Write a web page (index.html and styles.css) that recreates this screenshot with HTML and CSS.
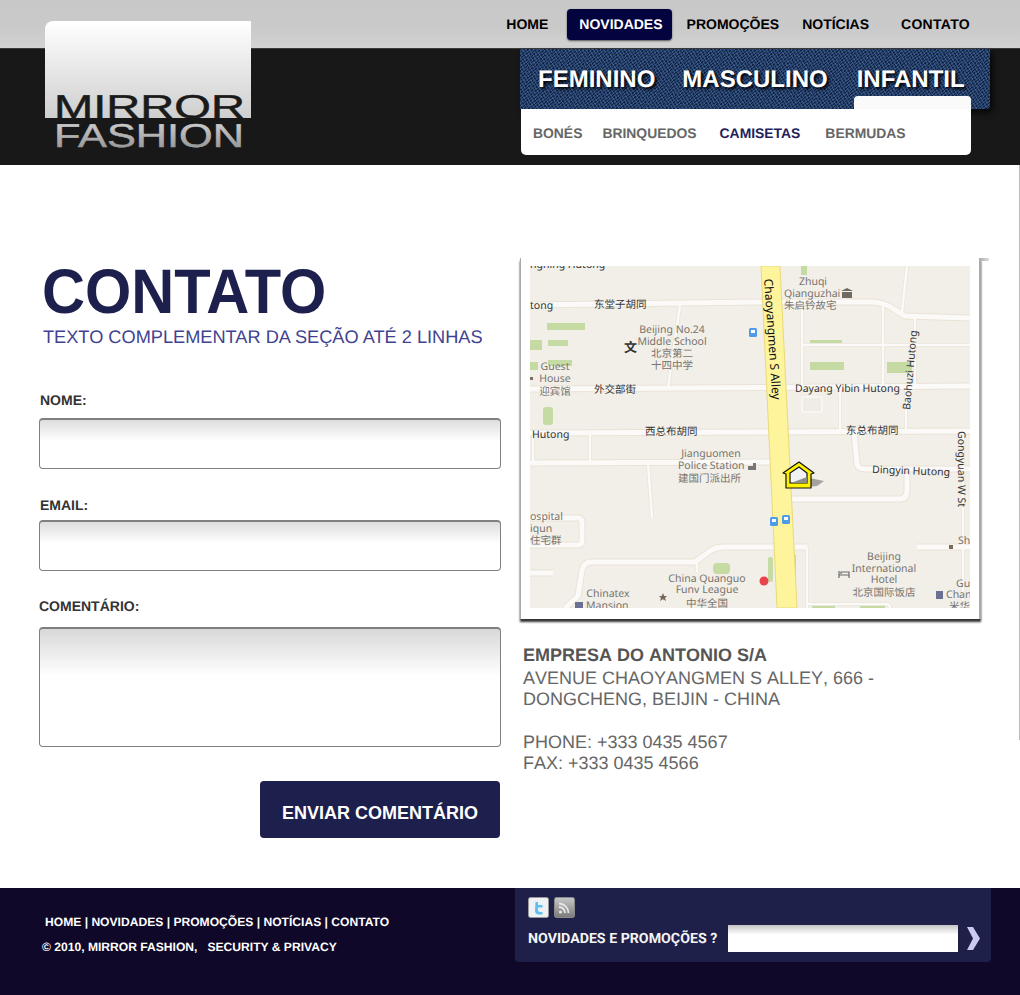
FILE: index.html
```html
<!DOCTYPE html>
<html lang="pt-BR">
<head>
    <meta charset="UTF-8">
    <meta name="viewport" content="width=device-width, initial-scale=1.0">
    <title>Mirror Fashion - Contato</title>
    <link rel="stylesheet" href="styles.css">
</head>
<body>
    <header class="site-header">
        <svg class="logo" width="206" height="130" viewBox="0 0 206 130" role="img" aria-label="Mirror Fashion">
            <defs>
                <linearGradient id="logo-panel" x1="0" y1="0" x2="0" y2="1">
                    <stop offset="0" stop-color="#ffffff"/>
                    <stop offset="1" stop-color="#cfcfcf"/>
                </linearGradient>
                <linearGradient id="logo-word" x1="0" y1="0" x2="0" y2="1">
                    <stop offset="0" stop-color="#d8d8d8"/>
                    <stop offset="1" stop-color="#8c8c8c"/>
                </linearGradient>
            </defs>
            <path d="M0 97V8a8 8 0 0 1 8-8H206V97Z" fill="url(#logo-panel)"/>
            <text class="logo-text" x="9" y="97" font-size="33" textLength="191" lengthAdjust="spacingAndGlyphs" fill="#1a1a1a" stroke="#1a1a1a" stroke-width=".5">MIRROR</text>
            <text class="logo-text" x="9" y="126" font-size="33" textLength="190" lengthAdjust="spacingAndGlyphs" fill="url(#logo-word)" stroke="url(#logo-word)" stroke-width=".5">FASHION</text>
        </svg>

        <div class="topbar">
            <nav class="top-nav">
                <a href="#">HOME</a>
                <a href="#" class="current">NOVIDADES</a>
                <a href="#">PROMOÇÕES</a>
                <a href="#">NOTÍCIAS</a>
                <a href="#">CONTATO</a>
            </nav>
        </div>

        <div class="band">
            <div class="menu">
                <nav class="categories">
                    <a href="#">FEMININO</a>
                    <a href="#">MASCULINO</a>
                    <a href="#">INFANTIL</a>
                    <span class="active-tab"></span>
                </nav>
                <nav class="subnav">
                    <a href="#">BONÉS</a>
                    <a href="#">BRINQUEDOS</a>
                    <a href="#" class="current">CAMISETAS</a>
                    <a href="#">BERMUDAS</a>
                </nav>
            </div>
        </div>
    </header>

    <main class="content">
        <section class="contact-col">
            <h1>CONTATO</h1>
            <p class="lead">TEXTO COMPLEMENTAR DA SEÇÃO ATÉ 2 LINHAS</p>

            <form class="contact-form">
                <label for="nome" class="label-nome">NOME:</label>
                <input type="text" id="nome" name="nome" class="input-nome">
                <label for="email" class="label-email">EMAIL:</label>
                <input type="text" id="email" name="email" class="input-email">
                <label for="comentario" class="label-comentario">COMENTÁRIO:</label>
                <textarea id="comentario" name="comentario"></textarea>
                <button type="submit"><span>ENVIAR COMENTÁRIO</span></button>
            </form>
        </section>

        <section class="info-col">
            <div class="map-frame">
                <svg class="map" width="440" height="342" viewBox="530 266 440 342" role="img" aria-label="Mapa">
                    <rect x="530" y="266" width="440" height="342" fill="#f2efe9"/>

                    <g fill="#c6dba4">
                        <rect x="547" y="323" width="38" height="7"/>
                        <rect x="530" y="340" width="12" height="10"/>
                        <rect x="548" y="340" width="20" height="6"/>
                        <rect x="548" y="360" width="24" height="6"/>
                        <rect x="530" y="362" width="8" height="8"/>
                        <rect x="543" y="407" width="10" height="18" rx="3"/>
                        <rect x="801" y="266" width="6" height="9"/>
                        <rect x="810" y="340" width="32" height="3"/>
                        <rect x="810" y="362" width="34" height="8"/>
                        <rect x="887" y="362" width="25" height="11"/>
                        <rect x="713" y="563" width="17" height="11" rx="4"/>
                        <rect x="768" y="557" width="5" height="25" rx="2"/>
                        <rect x="793" y="555" width="3" height="35"/>
                        <rect x="812" y="605" width="23" height="3"/>
                        <rect x="860" y="605" width="25" height="3"/>
                    </g>

                    <g fill="none" stroke="#e9e3d6" stroke-linejoin="round">
                        <path stroke-width="7" d="M530 305 L760 302 H870 Q885 302 895 310 L905 316 L970 318 M530 389 L970 386 M530 433 L970 431 M530 463 L770 462 M790 499 H900 Q907 499 907 490 V474 M854 432 L857 464 Q858 469 866 469 H970 M807 547 H725 Q716 547 710 551 L695 562 H592 Q584 562 582 570 L578 596 L565 608 M530 573 H553 M917 547 H970 M530 518 H578 Q582 518 582 522 V541 Q582 545 578 545 H530"/>
                        <path stroke-width="4" d="M907 266 L902 312 M915 316 V388 L906 388 V431 M802 305 V386 M883 305 V386 M802 345 H970 M840 386 V431 M680 305 L668 388 M590 432 V462 M533 432 V462 M648 463 L652 518 M963 432 V608 M807 547 V608 M807 604 H885 Q890 604 890 608 M697 562 V572"/>
                    </g>
                    <g fill="none" stroke="#fbfaf8" stroke-linejoin="round">
                        <path stroke-width="5" d="M530 305 L760 302 H870 Q885 302 895 310 L905 316 L970 318 M530 389 L970 386 M530 433 L970 431 M530 463 L770 462 M790 499 H900 Q907 499 907 490 V474 M854 432 L857 464 Q858 469 866 469 H970 M807 547 H725 Q716 547 710 551 L695 562 H592 Q584 562 582 570 L578 596 L565 608 M530 573 H553 M917 547 H970 M530 518 H578 Q582 518 582 522 V541 Q582 545 578 545 H530"/>
                        <path stroke-width="2.5" d="M907 266 L902 312 M915 316 V388 L906 388 V431 M802 305 V386 M883 305 V386 M802 345 H970 M840 386 V431 M680 305 L668 388 M590 432 V462 M533 432 V462 M648 463 L652 518 M963 432 V608 M807 547 V608 M807 604 H885 Q890 604 890 608 M697 562 V572"/>
                    </g>
                    <rect x="802" y="397" width="20" height="15" rx="2" fill="#efece5" stroke="#f8f6f2" stroke-width="2"/>

                    <polygon points="761,266 780,266 797,608 777,608" fill="#fdf49c" stroke="#e8d97c" stroke-width="1"/>

                    <text class="m-st" x="530" y="268">nghing Hutong</text>
                    <text class="m-st" x="594" y="308">东堂子胡同</text>
                    <text class="m-st" x="530" y="309">tong</text>
                    <text class="m-poi" x="813" y="285" text-anchor="middle">Zhuqi</text>
                    <text class="m-poi" x="784" y="297">Qianguzhai</text>
                    <text class="m-poi" x="784" y="309">朱启钤故宅</text>
                    <text class="m-poi" x="672" y="333" text-anchor="middle">Beijing No.24</text>
                    <text class="m-poi" x="672" y="345" text-anchor="middle">Middle School</text>
                    <text class="m-poi" x="672" y="357" text-anchor="middle">北京第二</text>
                    <text class="m-poi" x="672" y="369" text-anchor="middle">十四中学</text>
                    <text class="m-st m-glyph" x="624" y="352">文</text>
                    <text class="m-poi" x="555" y="370" text-anchor="middle">Guest</text>
                    <text class="m-poi" x="555" y="382" text-anchor="middle">House</text>
                    <text class="m-poi" x="555" y="395" text-anchor="middle">迎宾馆</text>
                    <text class="m-st" x="594" y="393">外交部街</text>
                    <text class="m-st" x="795" y="392">Dayang Yibin Hutong</text>
                    <text class="m-st" x="532" y="438">Hutong</text>
                    <text class="m-st" x="645" y="435">西总布胡同</text>
                    <text class="m-st" x="846" y="434">东总布胡同</text>
                    <text class="m-poi" x="711" y="457" text-anchor="middle">Jianguomen</text>
                    <text class="m-poi" x="678" y="469">Police Station</text>
                    <text class="m-poi" x="678" y="482">建国门派出所</text>
                    <text class="m-st" x="872" y="473" transform="rotate(2 872 473)">Dingyin Hutong</text>
                    <text class="m-poi" x="530" y="520">ospital</text>
                    <text class="m-poi" x="530" y="532">iqun</text>
                    <text class="m-poi" x="530" y="544">住宅群</text>
                    <text class="m-poi" x="958" y="544">Sh</text>
                    <text class="m-poi" x="884" y="560" text-anchor="middle">Beijing</text>
                    <text class="m-poi" x="884" y="572" text-anchor="middle">International</text>
                    <text class="m-poi" x="884" y="583" text-anchor="middle">Hotel</text>
                    <text class="m-poi" x="884" y="596" text-anchor="middle">北京国际饭店</text>
                    <text class="m-poi" x="956" y="587">Gu</text>
                    <text class="m-poi" x="946" y="598">Chan</text>
                    <text class="m-poi" x="949" y="610">米华</text>
                    <text class="m-poi" x="707" y="582" text-anchor="middle">China Quanguo</text>
                    <text class="m-poi" x="707" y="593" text-anchor="middle">Funv League</text>
                    <text class="m-poi" x="707" y="607" text-anchor="middle">中华全国</text>
                    <text class="m-poi" x="608" y="597" text-anchor="middle">Chinatex</text>
                    <text class="m-poi" x="586" y="609">Mansion</text>

                    <text class="m-st m-main" x="764" y="279" transform="rotate(86 764 279)">Chaoyangmen S Alley</text>
                    <text class="m-st" x="910" y="410" transform="rotate(-85 910 410)">Baohuzi Hutong</text>
                    <text class="m-st" x="958" y="431" transform="rotate(90 958 431)">Gongyuan W St</text>

                    <!-- icones do mapa -->
                    <g fill="#4f9be8">
                        <rect x="749" y="328" width="8" height="9" rx="1.5"/>
                        <rect x="770" y="517" width="8" height="9" rx="1.5"/>
                        <rect x="782" y="515" width="8" height="9" rx="1.5"/>
                    </g>
                    <g fill="#ffffff">
                        <rect x="751" y="330" width="4" height="3"/>
                        <rect x="772" y="519" width="4" height="3"/>
                        <rect x="784" y="517" width="4" height="3"/>
                    </g>
                    <path d="M847 288 L853 291 H841 Z M842 292 H852 V298 H842 Z" fill="#6f6a60"/>
                    <rect x="530" y="377" width="3" height="3" fill="#7a6f60"/>
                    <path d="M748 466 h5 v-3 h3 v7 h-8 Z" fill="#777777"/>
                    <rect x="949" y="545" width="4" height="4" fill="#7a6a58"/>
                    <path d="M839 571 V578 M839 575 H849 V578 M841 574 V572 H849 V575" fill="none" stroke="#6a6a6a" stroke-width="1.2"/>
                    <path d="M936 591 h7 v8 h-7 Z M575 602 h8 v6 h-8 Z" fill="#6a6f94"/>
                    <circle cx="764" cy="581" r="4.5" fill="#e8424a"/>
                    <polygon points="663,593 664.2,596 667,596 665,598 666,601 663,599.3 660,601 661,598 659,596 661.8,596" fill="#75695a"/>

                    <!-- marcador -->
                    <polygon points="800,476 824,481 817,486 797,488" fill="#8a8a8a" opacity=".75"/>
                    <path d="M799 462 L814 473 L811 474 V488 H786 V474 L783 473 Z" fill="#fff200" stroke="#111111" stroke-width="1.2" stroke-linejoin="round"/>
                    <path d="M799 467 L807 473 V483 H790 V473 Z" fill="#f2f2f2" stroke="#111111" stroke-width="1.2"/>
                    <polygon points="791,483 807,477 807,483" fill="#8c8c8c"/>
                </svg>
            </div>

            <address class="company">
                <strong>EMPRESA DO ANTONIO S/A</strong>
                <span>AVENUE CHAOYANGMEN S ALLEY, 666 -</span>
                <span>DONGCHENG, BEIJIN - CHINA</span>
                <span class="phone">PHONE: +333 0435 4567</span>
                <span>FAX: +333 0435 4566</span>
            </address>
        </section>
    </main>

    <footer class="site-footer">
        <div class="footer-links">
            <p class="footer-nav">HOME | NOVIDADES | PROMOÇÕES | NOTÍCIAS | CONTATO</p>
            <p class="footer-copy">© 2010, MIRROR FASHION, &nbsp; SECURITY &amp; PRIVACY</p>
        </div>
        <div class="newsletter">
            <div class="social">
                <svg width="21" height="21" viewBox="0 0 21 21" role="img" aria-label="Twitter">
                    <rect x=".5" y=".5" width="20" height="20" rx="2" fill="#eef2f5" stroke="#9a9a9a"/>
                    <path d="M7.500 5h2.500v3h4.500v2.500h-4.500v2.500q0 2 2 2h2.500v2.500h-3.500q-4 0-4-4Z" fill="#5cc0ee"/>
                </svg>
                <svg width="21" height="21" viewBox="0 0 21 21" role="img" aria-label="RSS">
                    <defs>
                        <linearGradient id="rss-bg" x1="0" y1="0" x2="0" y2="1">
                            <stop offset="0" stop-color="#c8c8c8"/>
                            <stop offset="1" stop-color="#7a7a7a"/>
                        </linearGradient>
                    </defs>
                    <rect x=".5" y=".5" width="20" height="20" rx="2" fill="url(#rss-bg)" stroke="#8a8a8a"/>
                    <circle cx="6.500" cy="15" r="1.600" fill="#e6e6e6"/>
                    <path d="M5 10a6 6 0 0 1 6 6M5 6.500a9.500 9.500 0 0 1 9.500 9.500" fill="none" stroke="#e6e6e6" stroke-width="1.800"/>
                </svg>
            </div>
            <form class="news-form">
                <label for="news">NOVIDADES E PROMOÇÕES ?</label>
                <input type="text" id="news" name="news">
                <button type="submit" aria-label="Enviar">
                    <svg width="13" height="23" viewBox="0 0 13 23"><polygon points="0,0 6,0 13,11.500 6,23 0,23 6,11.500" fill="#c9c9f2"/></svg>
                </button>
            </form>
        </div>
    </footer>
</body>
</html>
```

FILE: styles.css
```css
body {
    margin: 0;
    font-family: "Liberation Sans", Arial, sans-serif;
    text-rendering: geometricPrecision;
    background-color: #fff;
}
a {
    text-decoration: none;
}
p {
    margin: 0;
}

/* header */
.site-header {
    position: relative;
}
.logo {
    position: absolute;
    left: 45px;
    top: 21px;
}
.logo-text {
    font-family: "Liberation Sans", Arial, sans-serif;
}
.topbar {
    display: flex;
    justify-content: flex-end;
    align-items: center;
    height: 49px;
    padding: 1px 50px 0 0;
    box-sizing: border-box;
    background: linear-gradient(#c8c8c8, #cacaca 60%, #d3d3d3);
    border-bottom: 1px solid #3c3c3c;
}
.top-nav {
    display: flex;
    align-items: center;
}
.top-nav a {
    color: #000;
    font-size: 14px;
    font-weight: bold;
    line-height: 31px;
}
.top-nav a.current {
    margin: 0 15px 0 19px;
    padding: 0 9px 0 12px;
    color: #fff;
    background-color: #03033f;
    border-radius: 4px;
    box-shadow: 0 1px 2px #555;
}
.top-nav a:last-child {
    margin-left: 32px;
    letter-spacing: .3px;
}
.top-nav a:nth-child(4) {
    margin-left: 23px;
}
.band {
    display: flex;
    justify-content: flex-end;
    height: 116px;
    padding-right: 30px;
    background-color: #181818;
}
.menu {
    width: 470px;
}
.categories {
    position: relative;
    display: flex;
    gap: 27px;
    height: 60px;
    padding-left: 18px;
    box-sizing: border-box;
    border-radius: 0 0 4px 0;
    background:
        repeating-linear-gradient(58deg, rgba(120, 160, 215, .28) 0 1px, transparent 1px 3px),
        repeating-linear-gradient(-37deg, rgba(0, 0, 25, .5) 0 1px, transparent 1px 2.500px),
        #24416c;
    box-shadow: 3px 4px 6px rgba(0, 0, 0, .7);
}
.categories a {
    color: #fff;
    font-size: 24px;
    font-weight: bold;
    line-height: 61px;
    text-shadow: 2px 2px 3px #000;
}
.categories a:last-of-type {
    margin-left: 2px;
}
.active-tab {
    position: absolute;
    left: 334px;
    top: 47px;
    width: 117px;
    height: 13px;
    background-color: #fafafa;
    border-radius: 4px 4px 0 0;
}
.subnav {
    position: relative;
    display: flex;
    width: 450px;
    height: 46px;
    margin-left: 1px;
    padding-left: 12px;
    box-sizing: border-box;
    background-color: #fff;
    border-radius: 0 0 5px 5px;
}
.subnav a {
    color: #666;
    font-size: 13.900px;
    font-weight: bold;
    line-height: 48px;
}
.subnav a:nth-child(2) {
    margin-left: 20px;
}
.subnav a:nth-child(3) {
    margin-left: 23px;
}
.subnav a:nth-child(4) {
    margin-left: 25px;
}
.subnav a.current {
    color: #261f5c;
}

/* content */
.content {
    display: flex;
    gap: 19px;
    padding: 91px 0 50px 39px;
    background: linear-gradient(#bbb, #bbb) right top / 1px 575px no-repeat;
}
.contact-col {
    width: 462px;
}
h1 {
    margin: 0 0 -2px 3px;
    color: #1d1f4d;
    font-size: 63px;
    line-height: 72px;
    transform: scaleX(.945);
    transform-origin: left center;
}
.lead {
    padding-left: 4px;
    color: #3f4291;
    font-size: 18.200px;
    line-height: 22px;
}
.contact-form {
    display: flex;
    flex-direction: column;
}
label {
    color: #333;
    font-size: 14px;
    font-weight: bold;
    line-height: 16px;
}
.label-nome {
    margin: 44px 0 10px 1px;
}
.label-email {
    margin: 28px 0 7px 1px;
}
.label-comentario {
    margin: 27px 0 13px;
}
.contact-form input,
.contact-form textarea {
    display: block;
    width: 100%;
    margin: 0;
    padding: 8px;
    box-sizing: border-box;
    border: 1px solid #808080;
    border-top-width: 2px;
    border-radius: 4px;
    resize: none;
    outline: none;
}
.contact-form input {
    height: 51px;
    background: linear-gradient(#dedede, #fff 45%);
}
.contact-form textarea {
    height: 120px;
    background: linear-gradient(#d8d8d8, #fff 40%);
}
.contact-form button {
    align-self: flex-end;
    width: 240px;
    height: 57px;
    margin: 34px 1px 0 0;
    padding: 8px 0 0;
    color: #fff;
    font-family: inherit;
    font-size: 18px;
    font-weight: bold;
    background-color: #1d1f4d;
    border: none;
    border-radius: 4px;
    cursor: pointer;
}

.info-col {
    width: 461px;
}
.map-frame {
    position: relative;
    margin-top: 2px;
    padding: 8px 10px 10px 9px;
    background-color: #fff;
    border-left: 1px solid #aaa;
    border-right: 2px solid #aaa;
    box-sizing: border-box;
    height: 361px;
    box-shadow: 0 3px 2px rgba(0, 0, 0, .8);
}
.map-frame::after {
    content: "";
    position: absolute;
    left: 100%;
    top: 0;
    width: 10px;
    height: 3px;
    background: linear-gradient(to right, #aaa, #ddd);
}
.map {
    display: block;
}
.map text {
    font-family: "Noto Sans", "Noto Sans CJK SC", sans-serif;
    font-size: 10.500px;
}
.m-st {
    fill: #333;
}
.m-poi {
    fill: #77736d;
}
.map .m-glyph {
    font-size: 13px;
    font-weight: bold;
}
.map .m-main {
    fill: #111;
    font-size: 12px;
}
.company {
    display: flex;
    flex-direction: column;
    margin: 26px 0 0 3px;
    color: #666;
    font-size: 18px;
    font-style: normal;
    font-kerning: none;
    line-height: 21.500px;
}
.company strong {
    margin-bottom: 1px;
    color: #555;
}
.phone {
    margin-top: 21px;
}

/* footer */
.site-footer {
    display: flex;
    justify-content: space-between;
    height: 107px;
    padding-right: 29px;
    color: #fff;
    background-color: #0f0829;
}
.footer-links {
    padding: 26px 0 0 42px;
    font-size: 12.100px;
    font-weight: bold;
    line-height: 16px;
}
.footer-nav {
    padding-left: 3px;
}
.footer-copy {
    margin-top: 9px;
}
.newsletter {
    width: 476px;
    height: 74px;
    padding: 9px 10px 0 13px;
    box-sizing: border-box;
    background-color: #1e2049;
    border-radius: 0 0 4px 4px;
}
.social {
    display: flex;
    gap: 5px;
}
.social svg {
    display: block;
}
.news-form {
    display: flex;
    align-items: center;
    margin-top: 7px;
}
.news-form label {
    width: 200px;
    color: #f4f4f4;
    font-family: Roboto, "Liberation Sans", sans-serif;
    font-size: 14.200px;
    white-space: nowrap;
}
.news-form input {
    width: 230px;
    height: 27px;
    box-sizing: border-box;
    border: none;
    background: linear-gradient(#c4c4c4, #fff 35%);
}
.news-form button {
    display: flex;
    margin-left: 9px;
    padding: 0;
    background: none;
    border: none;
}
```
